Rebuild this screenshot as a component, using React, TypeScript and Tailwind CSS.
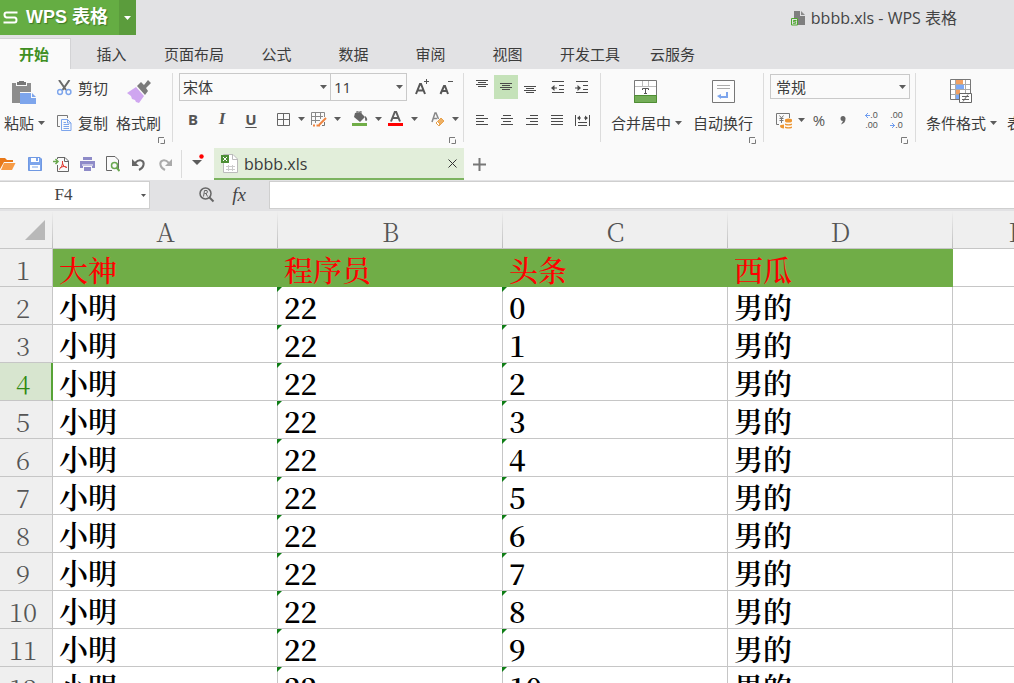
import React from "react";

type Kids = { children?: React.ReactNode };

const Caret = () => (
  <svg width="7" height="4" viewBox="0 0 7 4" className="shrink-0" aria-hidden="true">
    <path d="M0 0H7L3.5 4Z" fill="#5c5c5c" />
  </svg>
);

const Launcher = ({ label }: { label: string }) => (
  <button aria-label={label} className="flex h-2 w-2 items-center justify-center">
    <svg width="7" height="7" viewBox="0 0 7 7" fill="none" stroke="#7a7a7a" aria-hidden="true">
      <path d="M0.5 6V0.5H6M6.5 2.5V6.5H2.5" />
    </svg>
  </button>
);

const Divider = ({ tall = false }: { tall?: boolean }) => (
  <span className={tall ? "mt-1 h-[69px] w-px shrink-0 bg-[#dcdcdc]" : "h-6 w-px shrink-0 bg-[#dcdcdc]"} />
);

const Svg = ({ w, h, children }: { w: number; h: number } & Kids) => (
  <svg width={w} height={h} viewBox={`0 0 ${w} ${h}`} fill="none" className="shrink-0" aria-hidden="true">
    {children}
  </svg>
);

const Tool = ({ label, active = false, children }: { label: string; active?: boolean } & Kids) => (
  <button
    aria-label={label}
    className={
      active
        ? "flex h-6 w-6 shrink-0 items-center justify-center bg-[#c5e2b9]"
        : "flex h-6 w-6 shrink-0 items-center justify-center"
    }
  >
    {children}
  </button>
);

const DropTool = ({ label, children }: { label: string } & Kids) => (
  <button aria-label={label} className="flex h-6 w-[35px] shrink-0 items-center justify-between pl-1">
    {children}
    <Caret />
  </button>
);

const Lines = ({ rows }: { rows: [number, number, number][] }) => (
  <Svg w={14} h={16}>
    {rows.map(([x, y, len]) => (
      <path key={y} d={`M${x} ${y + 0.5}h${len}`} stroke="#4a4a4a" />
    ))}
  </Svg>
);

const TABS = ["插入", "页面布局", "公式", "数据", "审阅", "视图", "开发工具", "云服务"];

function TitleBar() {
  return (
    <header className="flex h-[35px] shrink-0 items-start justify-between">
      <div className="flex h-[35px] text-white">
        <button className="flex w-[119px] items-center gap-2 bg-[#65ad43] pl-[3px] font-['Liberation_Sans','Noto_Sans_CJK_SC',sans-serif] text-[18px] font-bold [text-shadow:1px_1px_1px_#3d7825]">
          <Svg w={15} h={13}>
            <path d="M14.5 1.5H3.5Q1.5 1.5 1.5 3.7T3.5 6.5H11.5Q13.5 6.5 13.5 9T11.5 11.5H0.5" stroke="#fff" strokeWidth="2" />
          </Svg>
          <span className="whitespace-nowrap">WPS 表格</span>
        </button>
        <button aria-label="主菜单" className="flex w-[17px] items-center justify-center bg-[#5b9c3c]">
          <Svg w={7} h={4}>
            <path d="M0 0H7L3.5 4Z" fill="#fff" />
          </Svg>
        </button>
      </div>
      <h1 className="mr-[57px] flex h-[35px] items-center gap-[6px] text-[16px] text-[#444]">
        <Svg w={14} h={16}>
          <path d="M3 1H9V6H14V15H3Z" fill="#7f7f7f" />
          <path d="M10 1L14 5H10Z" fill="#8c8c8c" />
          <path d="M0.500 8.500H6.500V15H0.500Z" fill="#e2e2e4" stroke="#4ea72e" />
          <path d="M5.500 10.500H2.500V11.800H4.700V13.300H2" stroke="#4ea72e" />
        </Svg>
        bbbb.xls - WPS 表格
      </h1>
    </header>
  );
}

function TabBar() {
  return (
    <nav className="mt-[3px] flex h-[31px] shrink-0 text-[15px] text-[#3c3c3c]">
      <button className="mr-[2px] w-[71px] border-t border-r border-[#d3d3d5] bg-[#fafafa] pr-[2px] font-bold text-[#3f8f22]">开始</button>
      {TABS.map((t) => (
        <button key={t} className="min-w-[77px] shrink-0 px-[14px] pt-[2px]">
          {t}
        </button>
      ))}
    </nav>
  );
}

function Clipboard() {
  return (
    <section className="flex h-full w-[172px] shrink-0 flex-col items-end">
      <div className="flex h-[64px] w-full pt-[9px] pl-1">
        <button className="flex w-[42px] flex-col items-start justify-between">
          <span className="pt-[3px] pl-2">
            <Svg w={25} h={24}>
              <path d="M0 2H4V5H15V2H19V11H8V22H0Z" fill="#8d8d8d" />
              <path d="M5 1H7V0H12V1H14V4H5Z" fill="#777" />
              <path d="M8 12H19V17H24V23H8Z" fill="#7da5ec" />
              <path d="M20 12L24 16H20Z" fill="#7da5ec" />
            </Svg>
          </span>
          <span className="flex items-center gap-1 leading-5 whitespace-nowrap">
            粘贴
            <Caret />
          </span>
        </button>
        <div className="ml-[11px] flex w-[53px] flex-col justify-between">
          <button className="flex items-center gap-[6px] leading-5 whitespace-nowrap">
            <Svg w={15} h={16}>
              <path d="M2 0L9 10M12.500 0L5.500 10" stroke="#6a6a6a" strokeWidth="2" />
              <circle cx="3" cy="12" r="2.400" stroke="#7da5ec" strokeWidth="1.500" />
              <circle cx="11.500" cy="12" r="2.400" stroke="#7da5ec" strokeWidth="1.500" />
            </Svg>
            剪切
          </button>
          <button className="flex items-center gap-[6px] leading-5 whitespace-nowrap">
            <Svg w={15} h={16}>
              <path d="M3 11.500H0.500V0.500H10.500V3" stroke="#777" />
              <path d="M4.500 4.500H10.500L14 8V15.500H4.500Z" stroke="#7da5ec" />
              <path d="M10.500 4.500V8H14M6.500 9.500H12M6.500 11.500H12M6.500 13.500H12M6.500 7.500H9" stroke="#7da5ec" />
            </Svg>
            复制
          </button>
        </div>
        <button className="ml-[6px] flex w-[45px] flex-col items-center justify-between">
          <span className="pt-[2px]">
            <Svg w={24} h={24}>
              <path d="M10 6L14 2L17 5L21 0L24 3L19 8L21 11L18 15Z" fill="#7b7b7b" />
              <path d="M9 7L17 16L12 23L9 22L8 20L5 19L4 16L0 13Z" fill="#cfa6f0" />
            </Svg>
          </span>
          <span className="leading-5 whitespace-nowrap">格式刷</span>
        </button>
      </div>
      <div className="mt-[3px] mr-[7px]"><Launcher label="剪贴板设置" /></div>
    </section>
  );
}

function FontGroup() {
  return (
    <section className="flex h-full w-[290px] shrink-0 flex-col items-start pl-[6px]">
      <div className="mt-1 flex h-7 items-center">
        <label className="relative h-7 w-[152px]">
          <span className="sr-only">字体</span>
          <select className="h-7 w-full appearance-none border border-[#c9c9c9] bg-transparent pl-[3px] leading-6 outline-none">
            <option>宋体</option>
          </select>
          <span className="pointer-events-none absolute top-3 right-1 flex h-1"><Caret /></span>
        </label>
        <label className="relative -ml-px h-7 w-[77px]">
          <span className="sr-only">字号</span>
          <select className="h-7 w-full appearance-none border border-[#c9c9c9] bg-transparent pl-[3px] leading-6 outline-none">
            <option>11</option>
          </select>
          <span className="pointer-events-none absolute top-3 right-1 flex h-1"><Caret /></span>
        </label>
        <button aria-label="增大字号" className="ml-2 flex h-6 w-4 items-center">
          <Svg w={15} h={16}>
            <path d="M1 15L5 5H6L10 15M2.500 11.500H8.500" stroke="#555" strokeWidth="2" />
            <path d="M9 2.500H14M11.500 0V5" stroke="#555" />
          </Svg>
        </button>
        <button aria-label="减小字号" className="ml-2 flex h-6 w-4 items-center">
          <Svg w={15} h={16}>
            <path d="M1.500 15L5 7H6L9 15M3 12H8" stroke="#555" strokeWidth="2" />
            <path d="M9 2.500H14" stroke="#555" />
          </Svg>
        </button>
      </div>
      <div className="mt-[6px] flex h-6 items-center gap-px text-[#555]">
        <button aria-label="加粗" className="w-7 font-['Noto_Sans'] font-bold">B</button>
        <button aria-label="倾斜" className="w-7 font-['Liberation_Serif'] text-[17px] font-bold italic">I</button>
        <button aria-label="下划线" className="w-7 font-['Noto_Sans'] font-bold underline underline-offset-2">U</button>
        <span className="ml-[3px]"><Divider /></span>
        <DropTool label="边框">
          <span className="pl-[3px]">
            <Svg w={13} h={13}>
              <path d="M0.500 0.500H12.500V12.500H0.500ZM6.500 0V13M0 6.500H13" stroke="#666" />
            </Svg>
          </span>
        </DropTool>
        <DropTool label="绘图边框">
          <span className="pl-px">
            <Svg w={16} h={16}>
              <path d="M0.500 14V1.500H13.500V6M4.500 1V12M9.500 1V8M0 5.500H12M0 9.500H9" stroke="#888" />
              <path d="M15 7L8 14" stroke="#ee8440" strokeWidth="2" />
              <path d="M2 14.500H4M5.500 14.500H9" stroke="#ee8440" strokeWidth="2" />
              <path d="M13.500 11V14.500H11" stroke="#777" />
            </Svg>
          </span>
        </DropTool>
        <span className="ml-1"><Divider /></span>
        <DropTool label="填充颜色">
          <span className="pl-px">
            <Svg w={16} h={16}>
              <path d="M3 2L8 1L13 6L8 11L2 6Z" fill="#666" />
              <path d="M5 3V0H9V5" stroke="#666" />
              <path d="M13 5C16 7 15.500 10 14 10C13 10 13 8 13 5Z" fill="#666" />
              <path d="M0 12H15V15H0Z" fill="#70ad47" />
            </Svg>
          </span>
        </DropTool>
        <DropTool label="字体颜色">
          <span className="pl-px">
            <Svg w={16} h={16}>
              <path d="M3 10.500L7 0.500H8L12 10.500M4.500 7H10.500" stroke="#5e5e5e" strokeWidth="2" />
              <path d="M0 12H15V15H0Z" fill="#ff0000" />
            </Svg>
          </span>
        </DropTool>
        <span className="ml-1"><Divider /></span>
        <DropTool label="清除格式">
          <span className="pl-[3px]">
            <Svg w={14} h={15}>
              <path d="M1 10L4 1H5L7.500 7M2 6.500H6" stroke="#888" strokeWidth="1.500" />
              <path d="M10 6L13 9L8 14L5 11Z" fill="#eeb064" stroke="#e7a14c" />
              <path d="M6.500 9.500L9 12L7.500 13.500L5 11Z" fill="#fff" stroke="#e7a14c" />
            </Svg>
          </span>
        </DropTool>
      </div>
      <div className="mt-[5px] mr-[7px] self-end"><Launcher label="字体设置" /></div>
    </section>
  );
}

function AlignGroup() {
  return (
    <section className="flex h-full w-[136px] shrink-0 flex-col pl-[6px]">
      <div className="mt-[6px] flex h-6 items-center">
        <Tool label="顶端对齐"><Lines rows={[[1, 1, 12], [3, 3, 8], [1, 5, 12], [3, 7, 8]]} /></Tool>
        <Tool label="垂直居中" active><Lines rows={[[1, 4, 12], [3, 6, 8], [1, 8, 12], [3, 10, 8]]} /></Tool>
        <Tool label="底端对齐"><Lines rows={[[1, 7, 12], [3, 9, 8], [1, 11, 12], [3, 13, 8]]} /></Tool>
        <span className="mx-[2px]"><Divider /></span>
        <Tool label="减少缩进量">
          <Svg w={14} h={14}>
            <path d="M1 1.500H13M8 5.500H13M8 9.500H13M1 12.500H13M1 8H6" stroke="#4a4a4a" />
            <path d="M0 8L3.500 5V11Z" fill="#4a4a4a" />
          </Svg>
        </Tool>
        <Tool label="增加缩进量">
          <Svg w={14} h={14}>
            <path d="M1 1.500H13M8 5.500H13M8 9.500H13M1 12.500H13M0 8H5" stroke="#4a4a4a" />
            <path d="M6 8L2.500 5V11Z" fill="#4a4a4a" />
          </Svg>
        </Tool>
      </div>
      <div className="mt-[9px] flex h-6 items-center gap-px">
        <Tool label="左对齐"><Lines rows={[[1, 3, 8], [1, 6, 12], [1, 9, 8], [1, 12, 12]]} /></Tool>
        <Tool label="水平居中"><Lines rows={[[3, 3, 8], [1, 6, 12], [3, 9, 8], [1, 12, 12]]} /></Tool>
        <Tool label="右对齐"><Lines rows={[[5, 3, 8], [1, 6, 12], [5, 9, 8], [1, 12, 12]]} /></Tool>
        <Tool label="两端对齐"><Lines rows={[[1, 3, 12], [1, 6, 12], [1, 9, 12], [1, 12, 12]]} /></Tool>
        <Tool label="分散对齐">
          <Svg w={15} h={13}>
            <path d="M0.500 1V12M14.500 1V12M3 8.500H12M3 11.500H12M3 4H6M9 4H12" stroke="#4a4a4a" />
            <path d="M2 4L5 1.500V6.500ZM13 4L10 1.500V6.500Z" fill="#4a4a4a" />
          </Svg>
        </Tool>
      </div>
    </section>
  );
}

function MergeGroup() {
  return (
    <section className="flex h-full w-[162px] shrink-0 flex-col">
      <div className="flex h-[64px] pt-[11px] pl-[10px]">
        <button className="flex w-[71px] flex-col justify-between whitespace-nowrap">
          <span className="pl-[23px]">
            <Svg w={23} h={23}>
              <path d="M0.500 0.500H22.500V22.500H0.500Z" fill="#fff" stroke="#777" />
              <path d="M1 6.500H22M8.500 1V6M14.500 1V6" stroke="#bbb" />
              <path d="M0.500 15.500H22.500V22.500H0.500Z" fill="#74ad58" stroke="#4f8e33" />
              <path d="M8.500 10V8.500H14.500V10M11.500 9V13.500M10 13.500H13" stroke="#555" />
            </Svg>
          </span>
          <span className="flex items-center gap-1 leading-5">合并居中<Caret /></span>
        </button>
        <button className="ml-[11px] flex w-[60px] flex-col items-center justify-between whitespace-nowrap">
          <Svg w={23} h={23}>
            <path d="M0.500 0.500H22.500V22.500H0.500Z" fill="#fdfdfd" stroke="#777" />
            <path d="M5 5.500H18M5 8.500H18" stroke="#aaa" />
            <path d="M14 12H16V18H9V19L5 16L9 14V16H14Z" fill="#7da5ec" />
          </Svg>
          <span className="leading-5">自动换行</span>
        </button>
      </div>
      <div className="mt-[3px] mr-[7px] self-end"><Launcher label="对齐设置" /></div>
    </section>
  );
}

function NumberGroup() {
  return (
    <section className="flex h-full w-[151px] shrink-0 flex-col pl-[6px]">
      <label className="relative mt-[5px] h-[25px] w-[140px] shrink-0">
        <span className="sr-only">数字格式</span>
        <select className="block h-[25px] w-full appearance-none border border-[#c9c9c9] bg-transparent pl-[5px] leading-5 outline-none">
          <option>常规</option>
        </select>
        <span className="pointer-events-none absolute top-[11px] right-1 flex h-1"><Caret /></span>
      </label>
      <div className="mt-[9px] flex h-6 items-center text-[#555]">
        <DropTool label="会计格式">
          <span className="pl-[2px]">
            <Svg w={17} h={17}>
              <path d="M3 12.500H0.500V1.500H13.500V6" stroke="#777" />
              <path d="M3.500 3.500L5.500 6L7.500 3.500M5.500 6V11M3.500 6.500H7.500M3.500 8.500H7.500" stroke="#777" />
              <path d="M9 8Q9 6.500 12.500 6.500T16 8V9Q16 10.500 12.500 10.500T9 9ZM9 11.500Q12.500 13 16 11.500V12.500Q16 13.500 12.500 13.500T9 12.500ZM9 14.500Q12.500 16 16 14.500V15.500Q16 16.500 12.500 16.500T9 15.500ZM4 14Q4 12.500 8 12.500V16.500Q4 16 4 14Z" fill="#ed9632" />
            </Svg>
          </span>
        </DropTool>
        <button aria-label="百分比样式" className="ml-[2px] w-6 font-['Open_Sans']">%</button>
        <Tool label="千位分隔样式">
          <Svg w={6} h={9}>
            <path d="M3 0A2.500 2.500 0 0 1 5.500 3Q5.500 7 1 8.500L3 5A2.500 2.500 0 0 1 3 0Z" fill="#666" />
          </Svg>
        </Tool>
        <span className="mr-[2px] ml-[2px]"><Divider /></span>
        <button aria-label="增加小数位数" className="flex w-[25px] flex-col items-center font-['Liberation_Sans'] text-[9px] leading-[10px]">
          <span className="flex items-center">
            <Svg w={5} h={5}><path d="M0 2.500H5M3 0L0.500 2.500L3 5" stroke="#6e9cf0" /></Svg>.0
          </span>
          <span>.00</span>
        </button>
        <button aria-label="减少小数位数" className="flex w-[25px] flex-col items-center font-['Liberation_Sans'] text-[9px] leading-[10px]">
          <span>.00</span>
          <span className="flex items-center">
            <Svg w={5} h={5}><path d="M0 2.500H5M2 0L4.500 2.500L2 5" stroke="#6e9cf0" /></Svg>.0
          </span>
        </button>
      </div>
      <div className="mt-1 mr-[7px] self-end"><Launcher label="数字设置" /></div>
    </section>
  );
}

function StyleGroup() {
  return (
    <section className="flex h-[64px] shrink-0 gap-[10px] pt-[10px] pl-[10px]">
      <button className="flex w-[71px] flex-col justify-between whitespace-nowrap">
        <span className="pl-6">
          <Svg w={23} h={24}>
            <path d="M0.500 0.500H20.500V20.500H0.500Z" fill="#fff" stroke="#777" />
            <path d="M1 5.500H20M1 10.500H20M1 15.500H20M5.500 1V20M15.500 1V20" stroke="#aaa" />
            <path d="M6 1H13V5H6ZM6 11H10V15H6Z" fill="#f1a062" />
            <path d="M6 6H14V10H6ZM6 16H9V20H6Z" fill="#7da9f5" />
            <path d="M9.500 14.500H21.500V23.500H9.500Z" fill="#fff" stroke="#666" />
            <path d="M12 17.500H19M12 20.500H19M18 15.500L13 22.500" stroke="#666" />
          </Svg>
        </span>
        <span className="flex items-center gap-1 leading-5">条件格式<Caret /></span>
      </button>
      <button className="flex w-[60px] shrink-0 items-end leading-5 whitespace-nowrap">表格样式</button>
    </section>
  );
}

function QuickAccess() {
  const cls = "flex h-full w-[26px] shrink-0 items-center justify-center";
  return (
    <div className="flex h-8 shrink-0 items-center bg-[#fafafa]">
      <button aria-label="打开" className="flex h-full w-[22px] shrink-0 items-center">
        <Svg w={16} h={14}>
          <path d="M0 1H5L7 3H13V5H4L0 12Z" fill="#e87818" />
          <path d="M4 6H15.500L12 13H1Z" fill="#f79b45" />
        </Svg>
      </button>
      <button aria-label="保存" className={cls}>
        <Svg w={14} h={14}>
          <path d="M0.500 0.500H12L13.500 2V13.500H0.500Z" fill="#7da5ec" stroke="#6f98e2" />
          <path d="M3 1H11V5H3ZM2 8H12V13H2Z" fill="#fff" />
          <path d="M8 1H10V4H8ZM4 9.500H10V10.500H4Z" fill="#7da5ec" />
        </Svg>
      </button>
      <button aria-label="输出为PDF" className={cls}>
        <Svg w={16} h={15}>
          <path d="M4.500 8V14.500H15.500V4L12 0.500H4.500V2" stroke="#666" />
          <path d="M11.500 1V4.500H15" stroke="#666" />
          <path d="M0 4.500H4M2.500 2L5 4.500L2.500 7" stroke="#6aa84f" strokeWidth="1.500" />
          <path d="M9.500 4C10 8 8 11 6 12.500M9.500 6C10 9 12 10.500 14 10.500M7 11C9 9.500 11 9 13.500 10" stroke="#e03a32" />
        </Svg>
      </button>
      <button aria-label="打印" className={cls}>
        <Svg w={15} h={14}>
          <path d="M3 0H12V3H3ZM0 4H15V11H12V9H3V11H0ZM4 10H11V14H4Z" fill="#8e8bc8" />
          <path d="M2 8H13" stroke="#fff" />
        </Svg>
      </button>
      <button aria-label="打印预览" className={cls}>
        <Svg w={14} h={16}>
          <path d="M6 14.500H0.500V0.500H9L12.500 4V14" stroke="#666" />
          <circle cx="8.500" cy="9.500" r="3" stroke="#6aa84f" strokeWidth="1.500" />
          <path d="M10.500 11.500L13.500 15" stroke="#6aa84f" strokeWidth="2" />
        </Svg>
      </button>
      <button aria-label="撤销" className={cls}>
        <Svg w={14} h={13}>
          <path d="M3 5C8 0 12.500 3 11.500 7C11 9.500 9 11 7 12" stroke="#666" strokeWidth="2" />
          <path d="M0 1V8H7Z" fill="#666" />
        </Svg>
      </button>
      <button aria-label="恢复" className={cls}>
        <Svg w={14} h={13}>
          <path d="M11 5C6 0 1.500 3 2.500 7C3 9.500 5 11 7 12" stroke="#aaa" strokeWidth="2" />
          <path d="M14 1V8H7Z" fill="#aaa" />
        </Svg>
      </button>
      <span className="ml-[3px] h-7 w-px bg-[#dcdcdc]" />
      <button aria-label="自定义快速访问工具栏" className="flex h-full w-8 items-start justify-center pt-[6px]">
        <Svg w={12} h={12}>
          <path d="M0 6H10L5 11Z" fill="#5c5c5c" />
          <circle cx="9.500" cy="2.500" r="2.200" fill="#f00" />
        </Svg>
      </button>
      <div className="flex h-full w-[250px] items-center border-b-2 border-[#7cb35f] bg-[#e2eeda] pl-[7px]">
        <Svg w={18} h={19}>
          <path d="M2.500 0.500H12L16.500 5V18.500H2.500Z" fill="#fff" stroke="#bbb" />
          <path d="M11.500 1V5.500H16" stroke="#bbb" />
          <path d="M5 12.500H14M5 15.500H14M7.500 11V17M11.500 11V17" stroke="#ccc" />
          <path d="M0 1H8V9H0Z" fill="#4d8f35" />
          <path d="M2 3L6 7M6 3L2 7" stroke="#fff" />
        </Svg>
        <a href="#bbbb" className="ml-[5px] pt-px text-[16px] text-[#3a3a3a]">bbbb.xls</a>
        <button aria-label="关闭" className="mr-[7px] ml-auto flex h-4 items-center">
          <Svg w={9} h={9}><path d="M0.500 0.500L8.500 8.500M8.500 0.500L0.500 8.500" stroke="#333" /></Svg>
        </button>
      </div>
      <button aria-label="新建" className="ml-2 flex">
        <Svg w={15} h={15}><path d="M7.500 1V14M1 7.500H14" stroke="#777" strokeWidth="2" /></Svg>
      </button>
    </div>
  );
}

function FormulaBar() {
  return (
    <div className="flex h-[31px] shrink-0 items-center bg-[#e2e2e4] pb-px">
      <div className="flex h-7 w-[150px] items-center border-y border-r border-[#cfcfcf] bg-white pr-[3px]">
        <input
          aria-label="名称框"
          defaultValue="F4"
          className="w-0 flex-1 bg-transparent pr-[14px] text-center font-['Liberation_Serif'] text-[17px] text-[#444] outline-none"
        />
        <button aria-label="展开名称框">
          <Svg w={5} h={3}><path d="M0 0H5L2.500 3Z" fill="#555" /></Svg>
        </button>
      </div>
      <button aria-label="查找" className="ml-[49px]">
        <Svg w={16} h={16}>
          <circle cx="6.500" cy="6.500" r="5.500" stroke="#666" strokeWidth="1.500" />
          <path d="M10.500 10.500L14.500 14.500" stroke="#666" strokeWidth="2" />
          <path d="M4.500 9.500L5.500 3.500H8Q9 5 7.500 6.500H5.500M7 6.500L8.500 9.500" stroke="#666" />
        </Svg>
      </button>
      <button aria-label="插入函数" className="ml-4 w-4 font-['Liberation_Serif'] text-[19px] text-[#444] italic">fx</button>
      <input aria-label="编辑栏" className="ml-[22px] h-7 min-w-0 flex-1 border-y border-l border-[#cfcfcf] bg-white px-1 outline-none" />
    </div>
  );
}

const ROWS = Array.from({ length: 11 }, (_, i) => ({ n: i + 2, name: "小明", age: "22", idx: String(i), sex: "男的" }));
const HEADS = ["大神", "程序员", "头条", "西瓜"];
const CELL = "relative h-[38px] border-r border-b border-[#c6c6c6] p-0 pt-[3px] pl-[6px] text-left text-[29px] leading-[34px] font-semibold";
const ROW_HEAD = "h-[38px] border-r border-b border-[#c6c6c6] bg-[#efefef] p-0 pt-[3px] pr-[6px] text-[26px] leading-[34px] font-light text-[#555]";
const ROW_HEAD_ON = "h-[38px] border-r-2 border-r-[#57a336] border-b border-b-[#c6c6c6] bg-[#d7e5cf] p-0 pt-[3px] pr-[5px] text-[26px] leading-[34px] font-light text-[#2f8a13]";

const Flag = () => (
  <svg width="5" height="5" viewBox="0 0 5 5" className="absolute top-0 -left-px" aria-hidden="true">
    <path d="M0 0H5L0 5Z" fill="#0f7d16" />
  </svg>
);

function Sheet() {
  return (
    <main className="min-h-0 flex-1 overflow-hidden bg-white">
      <table className="w-[1081px] table-fixed border-separate border-spacing-0 font-['Noto_Serif_CJK_SC','Liberation_Serif','Noto_Sans_CJK_SC',serif] text-black">
        <colgroup>
          <col className="w-[53px]" />
          <col span={4} className="w-[225px]" />
          <col className="w-32" />
        </colgroup>
        <thead>
          <tr>
            <th aria-label="全选" className="h-[38px] border-b border-[#c6c6c6] bg-[#efefef] bg-[linear-gradient(to_bottom,#efefef,#bdbdbd)] bg-[length:1px_100%] bg-right bg-no-repeat p-0 pr-2">
              <span className="flex justify-end">
                <Svg w={20} h={20}><path d="M20 0V20H0Z" fill="#b8b8b8" /></Svg>
              </span>
            </th>
            {["A", "B", "C", "D", "E"].map((c) => (
              <th
                key={c}
                className="h-[38px] border-b border-[#c6c6c6] bg-[#efefef] bg-[linear-gradient(to_bottom,#efefef,#bdbdbd)] bg-[length:1px_100%] bg-right bg-no-repeat p-0 pt-[3px] text-[26px] leading-[34px] font-light text-[#555]"
              >
                {c}
              </th>
            ))}
          </tr>
        </thead>
        <tbody>
          <tr>
            <th className={ROW_HEAD}>1</th>
            {HEADS.map((h) => (
              <td key={h} className="h-[38px] bg-[#70ad47] p-0 pt-[3px] pl-[6px] text-[29px] leading-[34px] font-medium text-[#ff0000]">{h}</td>
            ))}
            <td className={CELL} />
          </tr>
          {ROWS.map((r) => (
            <tr key={r.n}>
              <th className={r.n === 4 ? ROW_HEAD_ON : ROW_HEAD}>{r.n}</th>
              <td className={CELL}>{r.name}</td>
              <td className={CELL}><Flag />{r.age}</td>
              <td className={CELL}><Flag />{r.idx}</td>
              <td className={CELL}>{r.sex}</td>
              <td className={CELL} />
            </tr>
          ))}
        </tbody>
      </table>
    </main>
  );
}

export default function App() {
  return (
    <div className="flex h-screen flex-col overflow-hidden bg-[#e2e2e4] font-['Open_Sans','Noto_Sans_CJK_SC',sans-serif] text-[15px] text-[#3c3c3c]">
      <TitleBar />
      <TabBar />
      <div className="flex h-[79px] shrink-0 overflow-hidden bg-[#fafafa]">
        <Clipboard />
        <Divider tall />
        <FontGroup />
        <Divider tall />
        <AlignGroup />
        <Divider tall />
        <MergeGroup />
        <Divider tall />
        <NumberGroup />
        <Divider tall />
        <StyleGroup />
      </div>
      <QuickAccess />
      <FormulaBar />
      <Sheet />
    </div>
  );
}
